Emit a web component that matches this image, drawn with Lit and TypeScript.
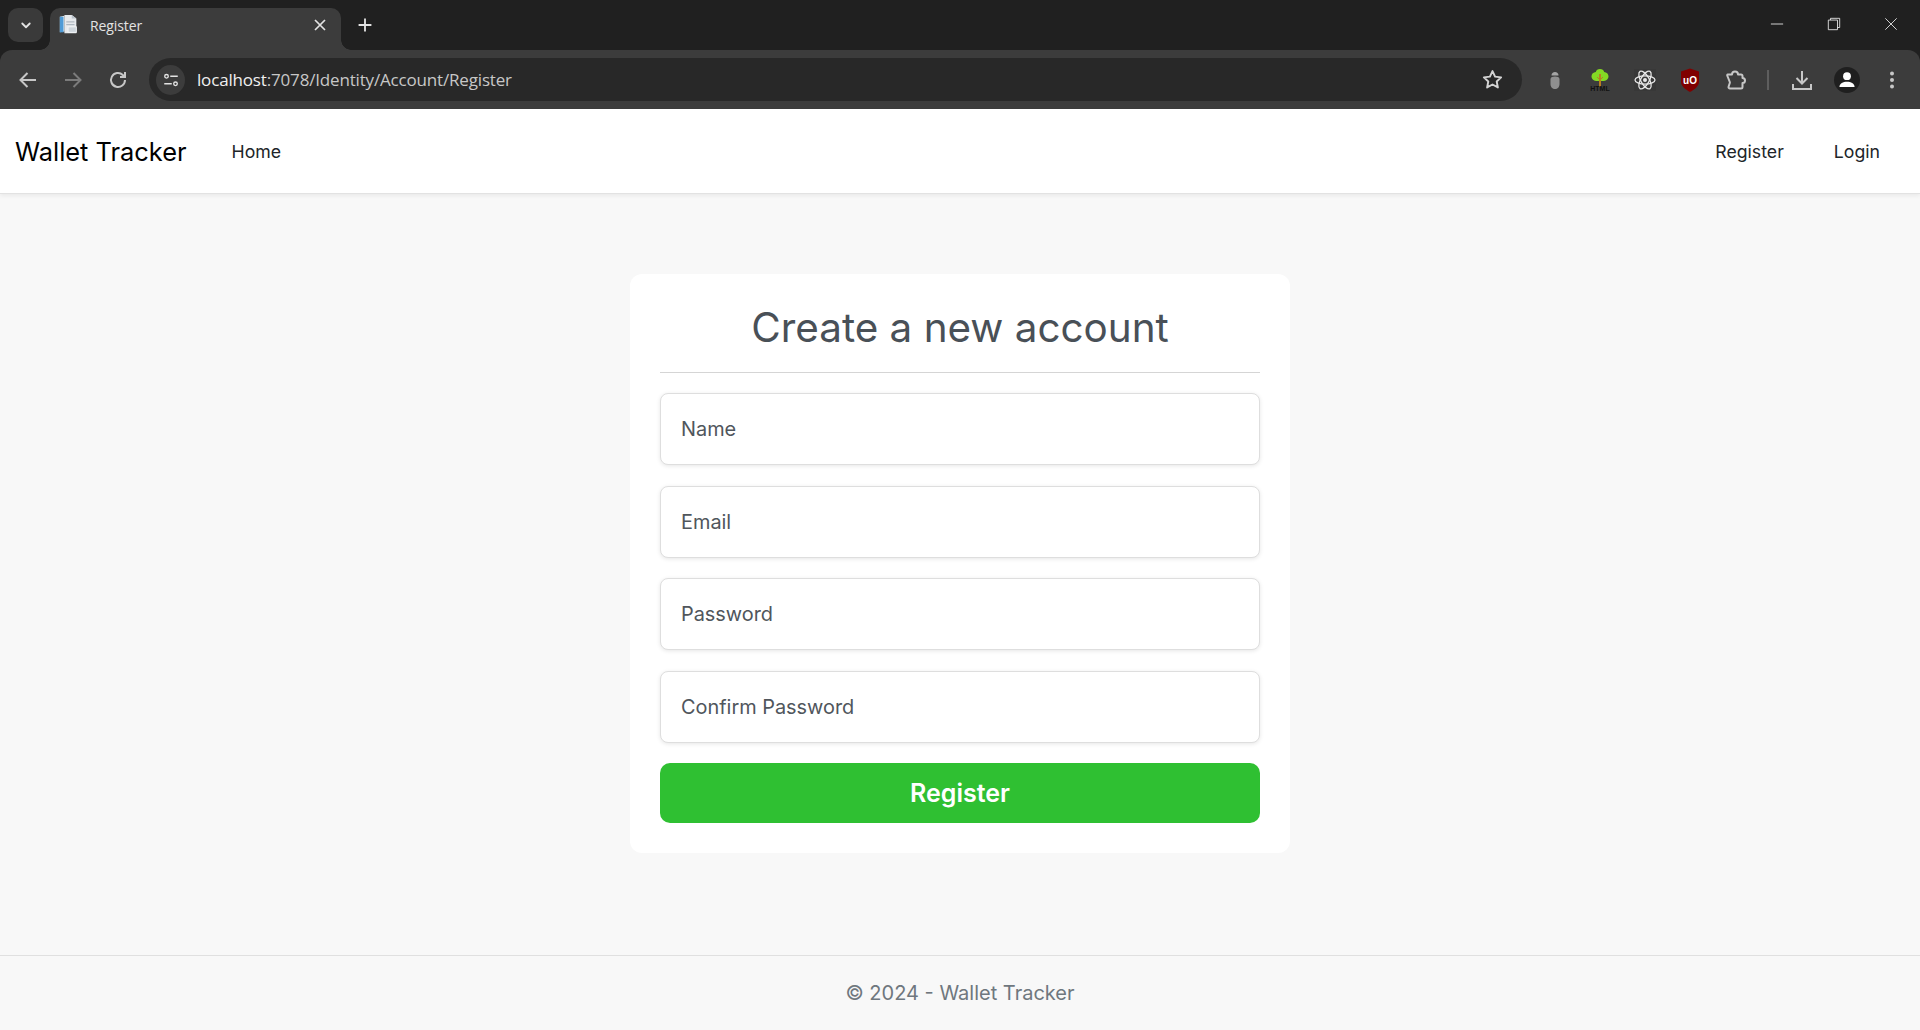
import { LitElement, html, css, svg } from 'lit';
import { customElement } from 'lit/decorators.js';

const icon = (size: number, body: unknown, viewBox = '0 0 24 24') => html`
  <svg width=${size} height=${size} viewBox=${viewBox} fill="none" aria-hidden="true">${body}</svg>
`;

// browser chrome icons
const chevron = svg`<path d="M7 10l5 5 5-5" stroke="#e3e3e3" stroke-width="2.4" stroke-linecap="round" stroke-linejoin="round"/>`;
const favicon = svg`
  <path d="M2 3l5-1v17l-5 1z" fill="#e8eef4"/>
  <rect x="2" y="3" width="4" height="17" fill="#4f9bd6"/>
  <path d="M7 1h8l5 4v16H7z" fill="#e6e9ec"/>
  <path d="M15 1l5 4h-5z" fill="#b9c2ca"/>
  <rect x="9" y="8" width="9" height="1.2" fill="#aab4bd"/>
  <rect x="9" y="11" width="9" height="1.2" fill="#aab4bd"/>
  <rect x="11" y="14" width="9" height="6" fill="#cfd6dc" stroke="#f4f6f8"/>`;
const closeX = svg`<path d="M7 7l10 10M17 7L7 17" stroke="#e3e3e3" stroke-width="1.700"/>`;
const plus = svg`<path d="M12 5v14M5 12h14" stroke="#e3e3e3" stroke-width="2"/>`;
const back = svg`<path d="M20 12H5M11.5 5L4.5 12l7 7" stroke="#c7c7c7" stroke-width="2"/>`;
const forward = svg`<path d="M4 12h15M12.5 5l7 7-7 7" stroke="#7b7b7b" stroke-width="2"/>`;
const reload = svg`<path d="M19 12a7 7 0 1 1-2.2-5.1L19 9M19 4v5h-5" stroke="#c7c7c7" stroke-width="2"/>`;
const tune = svg`
  <circle cx="6" cy="7" r="2.4" stroke="#e3e3e3" stroke-width="1.8"/>
  <path d="M11 7h10M3 17h10" stroke="#e3e3e3" stroke-width="1.8"/>
  <circle cx="18" cy="17" r="2.4" stroke="#e3e3e3" stroke-width="1.8"/>`;
const star = svg`<path d="M12 3.2l2.7 5.8 6.3.8-4.6 4.3 1.2 6.2L12 17.2l-5.6 3.1 1.2-6.2L3 9.8l6.3-.8z" stroke="#d4d4d4" stroke-width="2" stroke-linejoin="round"/>`;
const bug = svg`
  <path d="M8.500 7.500C8.500 5.500 10 4 12 4s3.500 1.500 3.500 3.500z" fill="#a5a5a5"/>
  <path d="M7.500 11c0-1.700 2-2.500 4.500-2.500s4.500.8 4.500 2.500v5c0 3-2 5-4.500 5s-4.500-2-4.500-5z" fill="#8f8f8f"/>`;
const tree = svg`
  <path d="M12 1c2.200 0 3.800 1.300 4.200 3 2.400.2 4.300 2 4.300 4.300 0 2.500-2 4.700-4.500 4.700H8c-2.500 0-4.500-2.200-4.500-4.700C3.500 6 5.400 4.200 7.800 4 8.200 2.300 9.800 1 12 1z" fill="#84d824"/>
  <path d="M11 6h2v13h-2z" fill="#b8801f"/>
  <path d="M12 12l-3-3M12 12l3-3" stroke="#b8801f" stroke-width="1"/>
  <text x="12" y="23" text-anchor="middle" font-family="Liberation Sans, sans-serif" font-size="7" font-weight="700" fill="#111">HTML</text>`;
const atom = svg`
  <rect x="1" y="1" width="22" height="22" fill="#383838"/>
  <circle cx="12" cy="12" r="2" fill="#e8e8e8"/>
  <g stroke="#e8e8e8" stroke-width="1.300">
    <ellipse cx="12" cy="12" rx="10" ry="4.200"/>
    <ellipse cx="12" cy="12" rx="10" ry="4.200" transform="rotate(60 12 12)"/>
    <ellipse cx="12" cy="12" rx="10" ry="4.200" transform="rotate(120 12 12)"/>
  </g>`;
const shield = svg`
  <path d="M12 .5l9 3v10c0 4.500-4 7.800-9 10.500-5-2.700-9-6-9-10.500v-10z" fill="#800000"/>
  <text x="12" y="15.500" text-anchor="middle" font-family="Liberation Sans, sans-serif" font-size="10" font-weight="700" fill="#fff">uO</text>`;
const puzzle = svg`<path d="M4.500 6.500h4.500a3 3 0 0 1 6 0h3a1.500 1.500 0 0 1 1.500 1.500v2a2.500 2.500 0 0 1 0 5v4a1.500 1.500 0 0 1-1.500 1.500H7a1.500 1.500 0 0 1-1.400-2l1.200-3.500a1.500 1.500 0 0 0 0-1l-2.600-6.500a1 1 0 0 1 .3-1z" stroke="#c7c7c7" stroke-width="2" stroke-linejoin="round"/>`;
const download = svg`<path d="M12 3v12M6.500 10l5.500 5.500 5.500-5.500M3 16v5h18v-5" stroke="#c7c7c7" stroke-width="2"/>`;
const person = svg`
  <circle cx="12" cy="12" r="12" fill="#1f1f1f"/>
  <circle cx="12" cy="8.500" r="3.600" fill="#fff"/>
  <path d="M5 18.500c0-3.500 3.500-5 7-5s7 1.500 7 5z" fill="#fff"/>`;
const dots = svg`<g fill="#c7c7c7"><circle cx="12" cy="5.500" r="2"/><circle cx="12" cy="12" r="2"/><circle cx="12" cy="18.500" r="2"/></g>`;

// window controls
const minimize = svg`<path d="M1 8h14" stroke="#e8e8e8" stroke-width="1"/>`;
const restore = svg`<path d="M1.500 3.500h10.500v11H1.500zM4 3.500V1.500h10.500v10.500H12" stroke="#e8e8e8" stroke-width="1"/>`;
const closeWin = svg`<path d="M1.500 1.500l13 13M14.500 1.500l-13 13" stroke="#e8e8e8" stroke-width="1"/>`;

@customElement('browser-chrome')
class BrowserChrome extends LitElement {
  static styles = css`
    :host {
      display: block;
      background: #202020;
      font-family: 'Open Sans', 'Liberation Sans', sans-serif;
    }

    .strip {
      height: 50px;
      display: flex;
      align-items: flex-start;
      padding-left: 8px;
      box-sizing: border-box;
    }

    .tab-list {
      width: 35px;
      height: 34px;
      margin-top: 8px;
      border-radius: 10px;
      background: #3a3a3a;
      display: flex;
      align-items: center;
      justify-content: center;
    }

    .tab {
      position: relative;
      width: 291px;
      height: 42px;
      margin: 8px 0 0 7px;
      border-radius: 10px 10px 0 0;
      background: #3c3c3c;
      display: flex;
      align-items: center;
      padding: 0 9px 8px 8px;
      box-sizing: border-box;
      color: #e3e3e3;
      font-size: 14px;
    }

    .tab::before,
    .tab::after {
      content: '';
      position: absolute;
      bottom: 0;
      width: 10px;
      height: 10px;
    }

    .tab::before {
      left: -10px;
      background: radial-gradient(circle at 0 0, #202020 9.500px, #3c3c3c 10px);
    }

    .tab::after {
      right: -10px;
      background: radial-gradient(circle at 100% 0, #202020 9.500px, #3c3c3c 10px);
    }

    .tab-title {
      flex: 1;
      margin-left: 10px;
      letter-spacing: -0.1px;
    }

    .new-tab {
      margin: 14px 0 0 13px;
      display: flex;
    }

    .win-controls {
      margin-left: auto;
      display: flex;
      align-items: center;
      height: 48px;
      gap: 43px;
      padding-right: 22px;
    }

    .toolbar {
      height: 59px;
      background: #3c3c3c;
      border-radius: 12px 12px 0 0;
      display: flex;
      align-items: center;
      padding-left: 16px;
      box-sizing: border-box;
    }

    .nav-btn {
      width: 24px;
      height: 24px;
      margin-right: 21px;
      display: flex;
      flex-shrink: 0;
    }

    .omnibox {
      flex: 0 0 1373px;
      height: 43px;
      margin-left: -2px;
      border-radius: 22px;
      background: #282828;
      display: flex;
      align-items: center;
      padding: 0 18px 0 7px;
      box-sizing: border-box;
      font-size: 17px;
      color: #c7c7c7;
    }

    .site-info {
      width: 29px;
      height: 30px;
      border-radius: 50%;
      background: #3c3c3c;
      display: flex;
      align-items: center;
      justify-content: center;
    }

    .url {
      flex: 1;
      margin-left: 12px;
      letter-spacing: -0.17px;
    }

    .url b {
      font-weight: 400;
      color: #f0f0f0;
    }

    .actions {
      flex: 1;
      display: flex;
      align-items: center;
      padding-left: 10px;
    }

    .action {
      width: 45px;
      display: flex;
      justify-content: center;
      flex-shrink: 0;
    }

    .sep {
      width: 2px;
      height: 20px;
      background: #5e5e5e;
      margin: 0 10px;
      flex-shrink: 0;
    }
  `;

  render() {
    return html`
      <div class="strip">
        <div class="tab-list">${icon(18, chevron)}</div>
        <div class="tab">
          ${icon(22, favicon)}
          <span class="tab-title">Register</span>
          ${icon(24, closeX)}
        </div>
        <div class="new-tab">${icon(22, plus)}</div>
        <div class="win-controls">
          ${icon(14, minimize, '0 0 16 16')} ${icon(14, restore, '0 0 16 16')} ${icon(14, closeWin, '0 0 16 16')}
        </div>
      </div>
      <div class="toolbar">
        <div class="nav-btn">${icon(24, back)}</div>
        <div class="nav-btn">${icon(24, forward)}</div>
        <div class="nav-btn">${icon(24, reload)}</div>
        <div class="omnibox">
          <div class="site-info">${icon(18, tune)}</div>
          <span class="url"><b>localhost</b>:7078/Identity/Account/Register</span>
          ${icon(23, star)}
        </div>
        <div class="actions">
          <div class="action">${icon(24, bug)}</div>
          <div class="action">${icon(24, tree)}</div>
          <div class="action">${icon(24, atom)}</div>
          <div class="action">${icon(24, shield)}</div>
          <div class="action">${icon(24, puzzle)}</div>
          <div class="sep"></div>
          <div class="action">${icon(24, download)}</div>
          <div class="action">${icon(26, person)}</div>
          <div class="action">${icon(24, dots)}</div>
        </div>
      </div>
    `;
  }
}

@customElement('app-root')
export class AppRoot extends LitElement {
  static styles = css`
    :host {
      display: flex;
      flex-direction: column;
      height: 1030px;
      background: #f8f8f8;
      font-family: Inter, 'Liberation Sans', sans-serif;
      overflow: hidden;
    }

    .navbar {
      height: 85px;
      background: #fff;
      border-bottom: 1px solid #e2e2e2;
      box-shadow: 0 2px 4px rgba(0, 0, 0, 0.06);
      display: flex;
      align-items: center;
      padding: 0 40px 0 15px;
      box-sizing: border-box;
      position: relative;
    }

    .brand {
      font-size: 25.400px;
      color: #000;
      margin-right: 45px;
    }

    .nav-link {
      font-size: 17.700px;
      color: #212529;
    }

    .nav-right {
      margin-left: auto;
      display: flex;
      gap: 50px;
    }

    main {
      flex: 1;
      padding-top: 80px;
      box-sizing: border-box;
    }

    .card {
      width: 660px;
      margin: 0 auto;
      padding: 0 30px 30px;
      box-sizing: border-box;
      background: #fff;
      border-radius: 12px;
    }

    h1 {
      margin: 0 0 20px;
      height: 99px;
      line-height: 107px;
      box-sizing: border-box;
      border-bottom: 1px solid #d5d5d5;
      text-align: center;
      font-size: 40.400px;
      font-weight: 400;
      color: #495057;
    }

    form {
      display: flex;
      flex-direction: column;
      gap: 20.600px;
    }

    input {
      height: 72px;
      padding: 0 20px;
      box-sizing: border-box;
      border: 1px solid #dedede;
      border-radius: 8px;
      box-shadow: 0 1px 4px rgba(0, 0, 0, 0.1);
      background: #fff;
      font: 400 19.900px Inter, 'Liberation Sans', sans-serif;
      outline: none;
    }

    input::placeholder {
      color: #50565c;
      opacity: 1;
    }

    button {
      height: 60px;
      border: none;
      border-radius: 10px;
      background: #2fc032;
      color: #fff;
      font: 600 25px Inter, 'Liberation Sans', sans-serif;
    }

    footer {
      height: 75px;
      border-top: 1px solid #e0e0e0;
      box-sizing: border-box;
      display: flex;
      align-items: center;
      justify-content: center;
      font-size: 20px;
      color: #6f777e;
    }
  `;

  render() {
    return html`
      <browser-chrome></browser-chrome>
      <nav class="navbar">
        <span class="brand">Wallet Tracker</span>
        <span class="nav-link">Home</span>
        <div class="nav-right">
          <span class="nav-link">Register</span>
          <span class="nav-link">Login</span>
        </div>
      </nav>
      <main>
        <div class="card">
          <h1>Create a new account</h1>
          <form>
            <input type="text" placeholder="Name" />
            <input type="email" placeholder="Email" />
            <input type="password" placeholder="Password" />
            <input type="password" placeholder="Confirm Password" />
            <button type="button">Register</button>
          </form>
        </div>
      </main>
      <footer>© 2024 - Wallet Tracker</footer>
    `;
  }
}
